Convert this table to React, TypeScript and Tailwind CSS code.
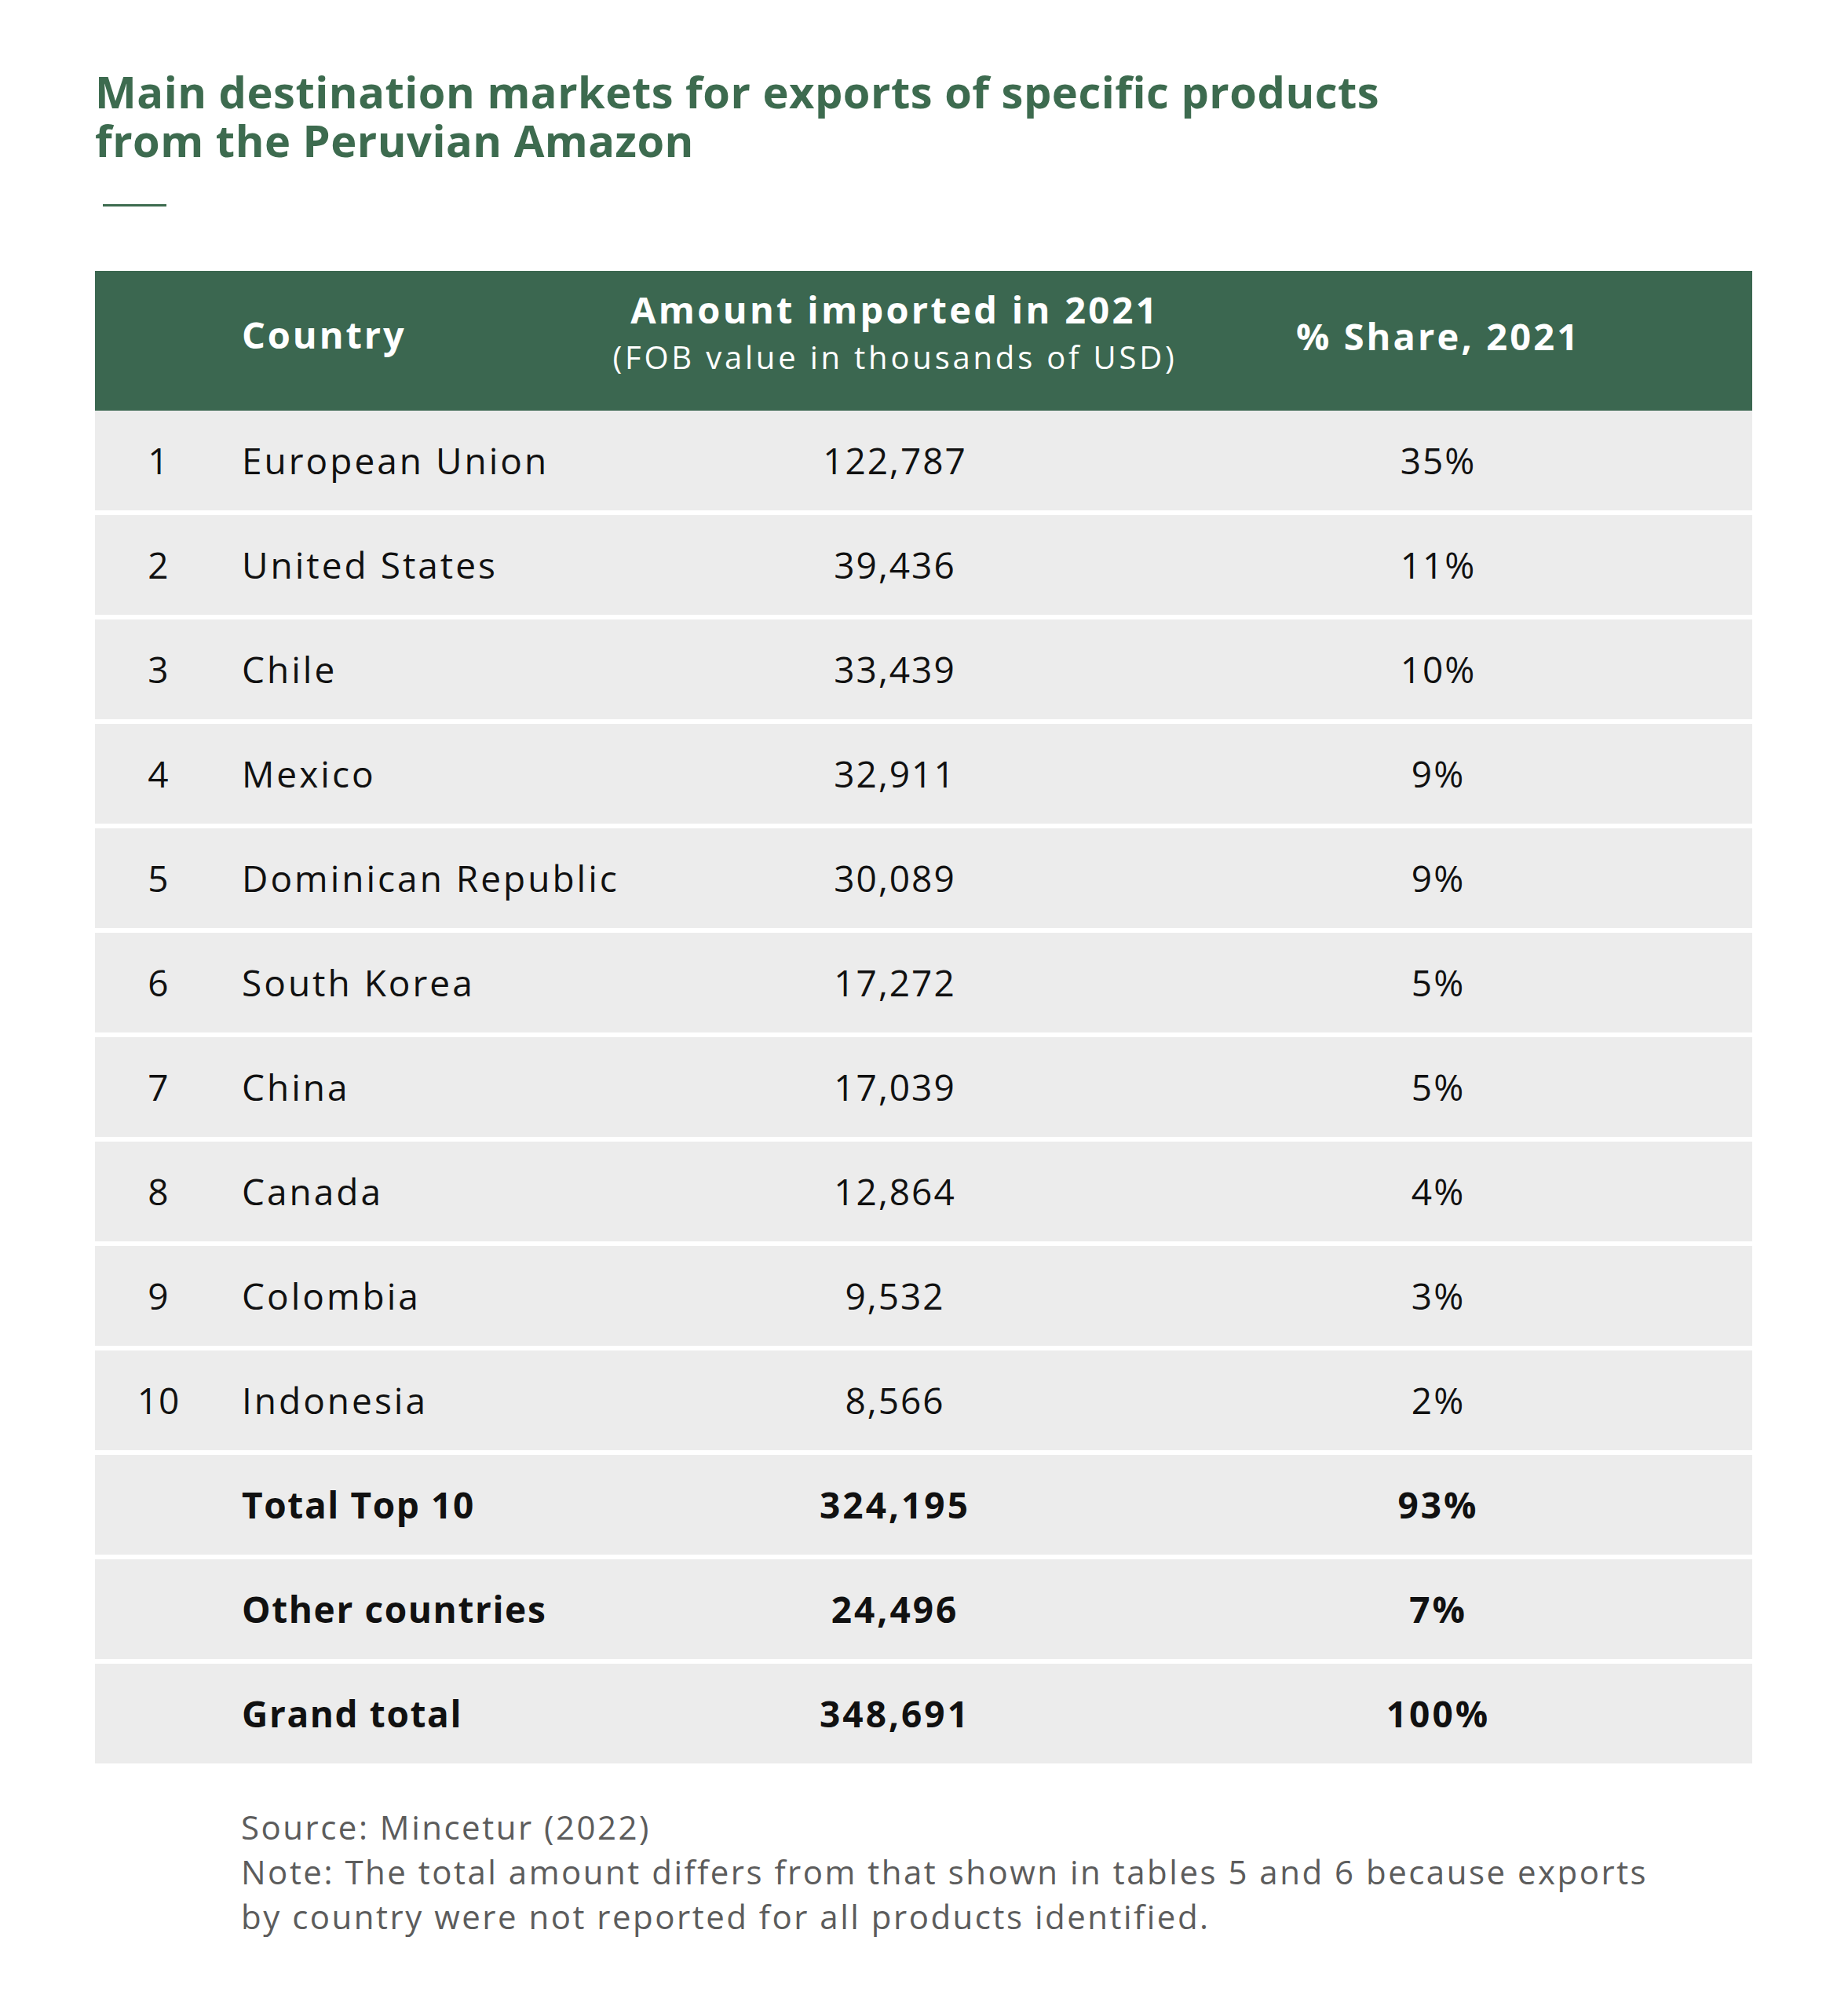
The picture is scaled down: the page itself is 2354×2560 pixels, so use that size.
import React from "react";

const rows: [string, string, string, string][] = [
  ["1", "European Union", "122,787", "35%"],
  ["2", "United States", "39,436", "11%"],
  ["3", "Chile", "33,439", "10%"],
  ["4", "Mexico", "32,911", "9%"],
  ["5", "Dominican Republic", "30,089", "9%"],
  ["6", "South Korea", "17,272", "5%"],
  ["7", "China", "17,039", "5%"],
  ["8", "Canada", "12,864", "4%"],
  ["9", "Colombia", "9,532", "3%"],
  ["10", "Indonesia", "8,566", "2%"],
];

const totals: [string, string, string][] = [
  ["Total Top 10", "324,195", "93%"],
  ["Other countries", "24,496", "7%"],
  ["Grand total", "348,691", "100%"],
];

export default function App() {
  return (
    <div
      className="w-[2354px] h-[2560px] bg-white pl-[121px] pt-[85px]"
      style={{ fontFamily: '"Open Sans", "Noto Sans", sans-serif' }}
    >
      <h1 className="text-[56px] leading-[62px] font-bold text-[#3d6b4f] tracking-[0.5px]">
        <div>Main destination markets for exports of specific products</div>
        <div>from the Peruvian Amazon</div>
      </h1>
      <div className="mt-[51px] ml-[10px] w-[81px] h-[3px] bg-[#3d6b4f]" />
      <div className="mt-[82px] w-[2111px] flex flex-col">
        <div className="h-[178px] bg-[#3b6750] text-white grid grid-cols-[162px_565px_584px_800px] items-start whitespace-nowrap">
          <div />
          <div className="pl-[25px] pt-[53px] text-[47px] font-bold leading-[57px] tracking-[2.9px]">
            Country
          </div>
          <div className="flex flex-col items-center pt-[21px]">
            <div className="text-[47px] font-bold leading-[57px] tracking-[3.3px]">
              Amount imported in 2021
            </div>
            <div className="mt-[3px] text-[40px] leading-[57px] tracking-[3.8px]">
              (FOB value in thousands of USD)
            </div>
          </div>
          <div className="pt-[55px] text-center text-[47px] font-bold leading-[57px] tracking-[3.1px]">
            % Share, 2021
          </div>
        </div>
        <div className="flex flex-col gap-[6px]">
          {rows.map((r) => (
            <div
              key={r[0]}
              className="h-[127px] bg-[#ececec] text-[#111111] text-[46px] leading-[69px] grid grid-cols-[162px_565px_584px_800px] items-center whitespace-nowrap"
            >
              <div className="text-center tracking-[1px]">{r[0]}</div>
              <div className="pl-[25px] tracking-[3px]">{r[1]}</div>
              <div className="text-center tracking-[2px]">{r[2]}</div>
              <div className="text-center tracking-[2px]">{r[3]}</div>
            </div>
          ))}
          {totals.map((r) => (
            <div
              key={r[0]}
              className="h-[127px] bg-[#ececec] text-[#111111] text-[46px] leading-[69px] font-bold grid grid-cols-[162px_565px_584px_800px] items-center whitespace-nowrap"
            >
              <div />
              <div className="pl-[25px] tracking-[1.6px]">{r[0]}</div>
              <div className="text-center tracking-[3px]">{r[1]}</div>
              <div className="text-center tracking-[3px]">{r[2]}</div>
            </div>
          ))}
        </div>
      </div>
      <div className="mt-[52px] pl-[186px] text-[42px] leading-[57px] text-[#5c5c5c] whitespace-nowrap tracking-[2.5px]">
        <div>Source: Mincetur (2022)</div>
        <div>Note: The total amount differs from that shown in tables 5 and 6 because exports</div>
        <div>by country were not reported for all products identified.</div>
      </div>
    </div>
  );
}
